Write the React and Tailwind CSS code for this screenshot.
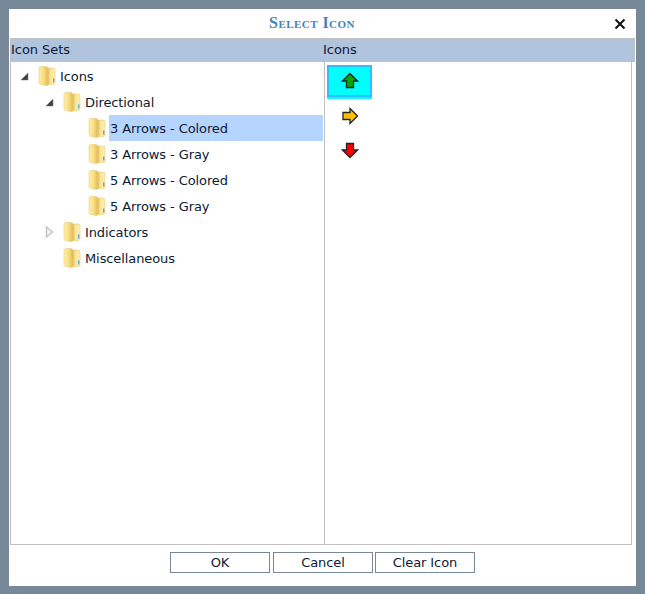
import React from "react";

const font = "font-['DejaVu_Sans',Verdana,sans-serif]";

function Folder() {
  return (
    <svg width="18" height="20" viewBox="0 0 18 20" className="shrink-0">
      <defs>
        <linearGradient id="fold" x1="0" y1="0" x2="1" y2="0">
          <stop offset="0" stopColor="#fff0a8" />
          <stop offset="0.55" stopColor="#f8dc80" />
          <stop offset="1" stopColor="#e2b850" />
        </linearGradient>
        <linearGradient id="back" x1="0" y1="0" x2="1" y2="0">
          <stop offset="0" stopColor="#d4a845" />
          <stop offset="0.4" stopColor="#f8e496" />
          <stop offset="1" stopColor="#fdf0b4" />
        </linearGradient>
      </defs>
      <path d="M9 2 L15 2 Q17 2 17 4 L17 17 Q17 18.5 15 18.5 L9 18.5 Z" fill="url(#back)" stroke="#e8cc80" strokeWidth="0.6" />
      <path d="M1 2 Q1 0.5 3 0.5 L8 0.5 Q10 0.5 10 3 L10 18 Q10 20 8 19.5 L2.5 18.5 Q1 18 1 16 Z" fill="url(#fold)" stroke="#e8cc80" strokeWidth="0.6" />
      <rect x="15" y="12.5" width="1.4" height="4" fill="#5aa9d6" />
    </svg>
  );
}

function Toggle({ open, leaf, width }) {
  if (leaf) return <span className={"shrink-0 " + width} />;
  return (
    <span className={"shrink-0 flex justify-start pl-[1px] " + width}>
      {open ? (
        <svg width="9" height="9" viewBox="0 0 9 9">
          <path d="M8 1 L8 8 L1 8 Z" fill="#404040" stroke="#7a7a7a" strokeWidth="0.5" />
        </svg>
      ) : (
        <svg width="9" height="12" viewBox="0 0 9 12">
          <path d="M1.5 1 L7.5 6 L1.5 11 Z" fill="#f4f4f4" stroke="#c4c4c4" strokeWidth="1.4" />
        </svg>
      )}
    </span>
  );
}

function TreeRow({ label, open, leaf, selected, children }) {
  return (
    <li>
      <div className="flex items-center h-[26px]">
        <Toggle open={open} leaf={leaf} width="w-[19px]" />
        <Folder />
        <span className={"ml-[3px] pl-[1px] h-[26px] pt-[1px] flex items-center text-[13px] tracking-[-0.1px] text-[#0c1a33] flex-1 " + (selected ? "bg-[#b5d5ff]" : "")}>
          {label}
        </span>
      </div>
      {children && <ul className="pl-[25px]">{children}</ul>}
    </li>
  );
}

function ArrowIcon({ d, fill }) {
  return (
    <svg width="18" height="18" viewBox="0 0 18 18">
      <path d={d} fill={fill} stroke="#222" strokeWidth="1.3" strokeLinejoin="miter" />
    </svg>
  );
}

function Btn({ children, className }) {
  return (
    <button className={"w-[100px] h-[21px] border border-[#778899] bg-white text-[13px] tracking-[-0.1px] text-[#0c1a33] flex items-center justify-center " + (className || "")}>
      {children}
    </button>
  );
}

export default function App() {
  return (
    <div className={"w-[645px] h-[594px] bg-[#778899] pt-[9px] pl-[9px] " + font}>
      <div className="w-[627px] h-[577px] bg-white flex flex-col">
        <div className="h-[29px] flex items-center relative shrink-0 pb-[2px]">
          <div className="flex-1 text-center pr-[21px] font-['Liberation_Serif',serif] font-bold text-[16px] text-[#4682b4] [font-variant:small-caps] tracking-[0.45px]">
            Select Icon
          </div>
          <svg width="12" height="12" viewBox="0 0 12 12" className="absolute right-[10px] top-[9px]">
            <path d="M1.5 1.5 L10.5 10.5 M10.5 1.5 L1.5 10.5" stroke="#111" strokeWidth="2" />
          </svg>
        </div>
        <div className="ml-[1px] w-[625px] h-[24px] shrink-0 flex bg-[#b0c4de] border-y border-[#c0c0c0] text-[13px] tracking-[-0.05px] text-[#0c1a33]">
          <div className="w-[312px] border-r border-l border-[#c0c0c0] flex items-center">Icon Sets</div>
          <div className="flex-1 pl-[1px] flex items-center border-r border-[#c0c0c0]">Icons</div>
        </div>
        <div className="ml-[1px] w-[622px] h-[483px] shrink-0 flex border-x border-b border-[#c0c0c0]">
          <div className="w-[314px] border-r border-[#c0c0c0] pt-[1px] pl-[8px] pr-[1px]">
            <ul>
              <TreeRow label="Icons" open>
                <TreeRow label="Directional" open>
                  <TreeRow label="3 Arrows - Colored" leaf selected />
                  <TreeRow label="3 Arrows - Gray" leaf />
                  <TreeRow label="5 Arrows - Colored" leaf />
                  <TreeRow label="5 Arrows - Gray" leaf />
                </TreeRow>
                <TreeRow label="Indicators" />
                <TreeRow label="Miscellaneous" leaf />
              </TreeRow>
            </ul>
          </div>
          <div className="flex-1 pt-[3px] pl-[2px] flex flex-col items-start">
            <div className="w-[45px] h-[34px] bg-[#00ffff]">
              <div className="h-[32px] border-2 border-[#33bbff] flex items-center justify-center">
                <ArrowIcon d="M9 1.5 L16.5 9 L12.5 9 L12.5 15.5 L5.5 15.5 L5.5 9 L1.5 9 Z" fill="#00aa00" />
              </div>
            </div>
            <div className="w-[45px] h-[34px] flex items-center justify-center pb-[1px]">
              <ArrowIcon d="M16.5 9 L9 1.5 L9 5.5 L2 5.5 L2 12.5 L9 12.5 L9 16.5 Z" fill="#ffc000" />
            </div>
            <div className="w-[45px] h-[34px] flex items-center justify-center pb-[1px]">
              <ArrowIcon d="M9 16.5 L16.5 9 L12.5 9 L12.5 2.5 L5.5 2.5 L5.5 9 L1.5 9 Z" fill="#ff0000" />
            </div>
          </div>
        </div>
        <div className="flex justify-start pt-[7px] pl-[161px]">
          <Btn>OK</Btn>
          <Btn className="ml-[3px]">Cancel</Btn>
          <Btn className="ml-[2px]">Clear Icon</Btn>
        </div>
      </div>
    </div>
  );
}
